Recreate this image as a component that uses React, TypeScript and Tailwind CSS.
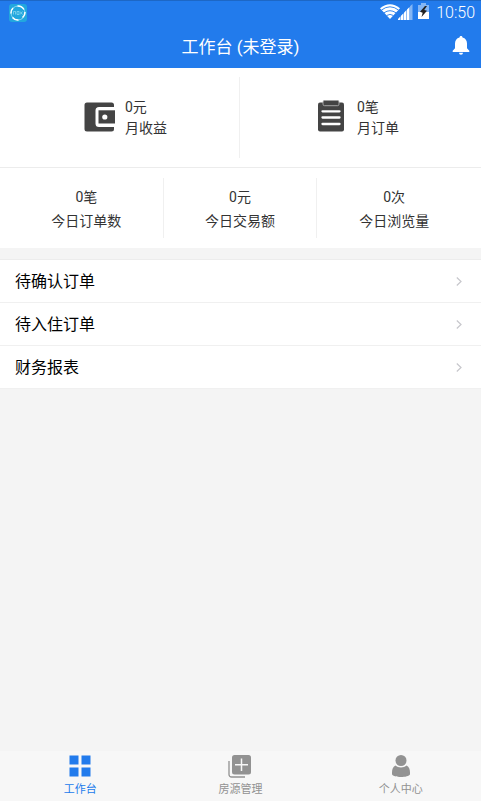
import { clsx } from "clsx";

interface Stat {
  value: string;
  label: string;
}

const todayStats: Stat[] = [
  { value: "0笔", label: "今日订单数" },
  { value: "0元", label: "今日交易额" },
  { value: "0次", label: "今日浏览量" },
];

const menuItems = ["待确认订单", "待入住订单", "财务报表"];

function NoxIcon() {
  return (
    <svg className="h-[18px] w-[18px]" viewBox="0 0 18 18">
      <rect width="18" height="18" rx="3" fill="#22a7de" />
      <circle cx="9" cy="9" r="7" fill="none" stroke="#8bd9ef" strokeWidth="1" />
      <path
        d="M8.5 2A7 7 0 0 1 15 5.5M16 8a7 7 0 0 1-2.5 5.5M9.5 16A7 7 0 0 1 3.5 13.5M2 9.500a7 7 0 0 1 2-5.500"
        fill="none"
        stroke="#fff"
        strokeWidth="1.500"
      />
      <path
        d="M4.500 10.500v-3h2v3M8 7.500h2v3H8zM11 7.500l2.500 3M13.500 7.500l-2.500 3"
        fill="none"
        stroke="#a5e4f3"
        strokeWidth=".6"
      />
    </svg>
  );
}

function WifiIcon() {
  return (
    <svg className="h-[15px] w-[20px]" viewBox="0 0 20 15">
      <path d="M0 4.200Q10-3.500 20 4.200L10 15Z" fill="#fff" />
      <path
        d="M1.500 6Q10-.4 18.500 6M4 8.800q6-4.200 12 0M6.600 11.500q3.400-2.200 6.800 0"
        fill="none"
        stroke="#227bec"
        strokeWidth=".9"
      />
    </svg>
  );
}

function SignalIcon() {
  return (
    <svg className="h-[16px] w-[15px]" viewBox="0 0 15 16">
      <path
        d="M0 15L2.500 12.300V16H0zM3 11.800L5.500 9.200V16H3zM6 8.700L8.500 6V16H6zM9 5.500L11.500 2.900V16H9z"
        fill="#fff"
      />
      <path d="M12 2.300L14.500 0v16H12z" fill="#83b5f4" />
    </svg>
  );
}

function BatteryIcon() {
  return (
    <svg className="h-[16px] w-[11px]" viewBox="0 0 11 16">
      <path d="M3 0h5v2h3v7H0V2h3z" fill="#84b6f5" />
      <path d="M0 9h11v7H0z" fill="#fff" />
      <path d="M7 3L2 8.700l2.700 1-1.200 4.300L9 7.700 6.200 7 9 3z" fill="#222" />
    </svg>
  );
}

function BellIcon() {
  return (
    <svg className="h-[19px] w-[18px]" viewBox="0 0 18 19">
      <path
        d="M9 0c-1 0-1.500.7-1.500 1.500C4.500 2.200 3 4.500 3 7.500v4.700L.7 14.700V16h16.600v-1.300L15 12.200V7.500c0-3-1.500-5.300-4.500-6C10.500.7 10 0 9 0zM7 16.800a2 2 0 0 0 4 0z"
        fill="#fff"
      />
    </svg>
  );
}

function WalletIcon() {
  return (
    <svg className="h-[30px] w-[32px]" viewBox="0 0 32 30">
      <path
        d="M3 .5h24.500a2.500 2.500 0 0 1 2.500 2.500V5H15a3.500 3.500 0 0 0-3.500 3.500v13A3.500 3.500 0 0 0 15 25h15v2a2.500 2.500 0 0 1-2.500 2.500H3a2.500 2.500 0 0 1-2.500-2.500V3A2.500 2.500 0 0 1 3 .5z"
        fill="#444"
      />
      <path d="M14.500 8.300h16.500v13.200H14.500z" fill="#444" />
      <circle cx="20.800" cy="15" r="2.600" fill="#fff" />
    </svg>
  );
}

function ClipboardIcon() {
  return (
    <svg className="h-[32px] w-[26px]" viewBox="0 0 26 32">
      <rect y="2.500" width="26" height="29" rx="2" fill="#444" />
      <rect x="5" y=".3" width="16" height="5.400" rx="1.500" fill="#444" stroke="#bbb" strokeWidth=".8" />
      <path d="M4.500 11.300h17M4.500 17.500h17M4.500 24h17" stroke="#fff" strokeWidth="2.300" strokeLinecap="round" />
    </svg>
  );
}

function ArrowIcon() {
  return (
    <svg className="h-[9px] w-[6px]" viewBox="0 0 6 9">
      <path d="M.8.5l4.200 4-4.200 4" fill="none" stroke="#c7c7cc" strokeWidth="1.200" />
    </svg>
  );
}

function GridIcon() {
  return (
    <svg className="h-[22px] w-[22px]" viewBox="0 0 22 22">
      <path d="M.5.500h9v9h-9zM12.500.500h9v9h-9zM.5 12.500h9v9h-9zM12.500 12.500h9v9h-9z" fill="#227bec" />
    </svg>
  );
}

function HouseIcon() {
  return (
    <svg className="h-[23px] w-[24px]" viewBox="0 0 24 23">
      <rect x="4" width="19" height="19.500" rx="2.500" fill="#929292" />
      <path d="M13.500 3.500v12.500M7 9.800h13" stroke="#f7f7f7" strokeWidth="1.500" />
      <path d="M1 6v13.500a2.500 2.500 0 0 0 2.500 2.500h13.500" fill="none" stroke="#929292" strokeWidth="1.300" />
    </svg>
  );
}

function UserIcon() {
  return (
    <svg className="h-[22px] w-[18px]" viewBox="0 0 18 22">
      <circle cx="9" cy="5.500" r="5.500" fill="#929292" />
      <path
        d="M3.300 10.600c3.200 2.600 8.200 2.600 11.400 0C17 12 18 14.500 18 17.500v1.700C17.200 21 13 22 9 22S.8 21 0 19.200v-1.700C0 14.500 1 12 3.300 10.600z"
        fill="#929292"
      />
    </svg>
  );
}

const tabs = [
  { label: "工作台", icon: GridIcon, active: true },
  { label: "房源管理", icon: HouseIcon, active: false },
  { label: "个人中心", icon: UserIcon, active: false },
];

export default function App() {
  return (
    <div className="flex h-[801px] w-[481px] flex-col overflow-hidden bg-[#f4f4f4] font-[Roboto,'Noto_Sans_CJK_SC',sans-serif] text-[#333]">
      <header className="h-[68px] shrink-0 border-t border-[#1d67c5] bg-[#227bec] text-white">
        {/* Status bar */}
        <div className="flex h-6 items-start pt-[3px] pr-1.5 pl-[9px]">
          <NoxIcon />
          <div className="ml-auto flex items-start">
            <WifiIcon />
            <div className="-ml-[2px]">
              <SignalIcon />
            </div>
            <div className="-mt-px ml-[5px]">
              <BatteryIcon />
            </div>
            <span className="ml-[7px] text-[16px] leading-[18px] font-light">10:50</span>
          </div>
        </div>
        <div className="grid h-[43px] grid-cols-[1fr_auto_1fr] items-center">
          <h1 className="col-start-2 text-[17px] leading-6">工作台 (未登录)</h1>
          <button className="mr-[11px] justify-self-end pb-[2px]" aria-label="消息">
            <BellIcon />
          </button>
        </div>
      </header>

      {/* Monthly summary */}
      <section className="flex h-[100px] shrink-0 border-b border-[#ececec] bg-white py-[9px] text-[14px] leading-[21px]">
        <div className="flex w-60 items-center border-r border-[#f0f0f0] pl-[84px]">
          <div className="pb-[2px]">
            <WalletIcon />
          </div>
          <div className="ml-[9px]">
            <p>0元</p>
            <p>月收益</p>
          </div>
        </div>
        <div className="flex flex-1 items-center pl-[78px]">
          <div className="pb-[3px]">
            <ClipboardIcon />
          </div>
          <div className="ml-[13px]">
            <p>0笔</p>
            <p>月订单</p>
          </div>
        </div>
      </section>

      {/* Today */}
      <section className="grid h-[80px] shrink-0 grid-cols-3 bg-white px-2.5 py-2.5 text-center text-[14px] leading-6">
        {todayStats.map((stat, index) => (
          <div
            key={stat.label}
            className={clsx("pt-[7px]", index < todayStats.length - 1 && "border-r border-[#f0f0f0]")}
          >
            <p>{stat.value}</p>
            <p>{stat.label}</p>
          </div>
        ))}
      </section>

      <ul className="mt-[11px] shrink-0 border-t border-[#ececec] bg-white text-[16px] text-black">
        {menuItems.map((item) => (
          <li key={item} className="flex h-[43px] items-center justify-between border-b border-[#f0f0f0] pr-[19px] pl-[15px]">
            <span className="pt-[2px]">{item}</span>
            <ArrowIcon />
          </li>
        ))}
      </ul>

      <nav className="mt-auto grid h-[50px] shrink-0 grid-cols-3 bg-[#f7f7f7]">
        {tabs.map(({ label, icon: Icon, active }) => (
          <button
            key={label}
            className={clsx("flex flex-col items-center pt-1", active ? "text-[#227bec]" : "text-[#929292]")}
          >
            <span className="flex h-[26px] items-start">
              <Icon />
            </span>
            <span className="text-[11px] leading-[18px]">{label}</span>
          </button>
        ))}
      </nav>
    </div>
  );
}
